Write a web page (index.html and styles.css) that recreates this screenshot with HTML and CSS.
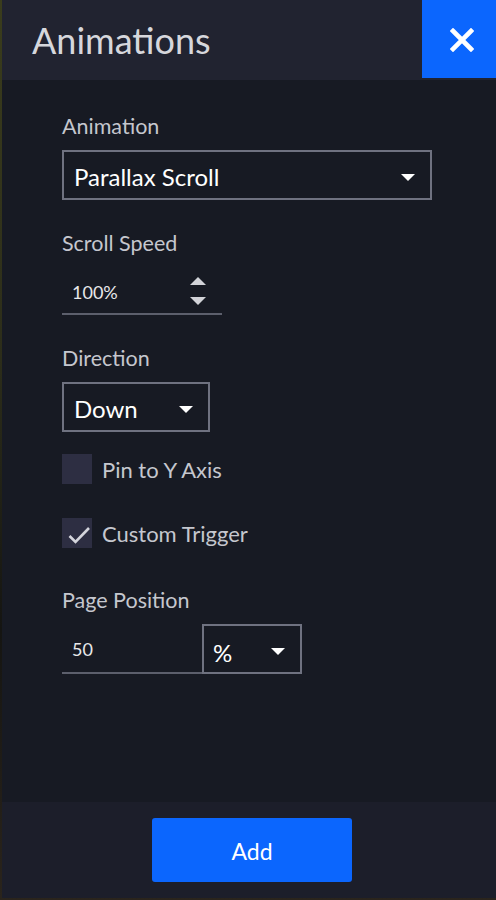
FILE: index.html
```html
<!DOCTYPE html>
<html lang="en">
<head>
<meta charset="utf-8">
<title>Animations</title>
<link rel="stylesheet" href="styles.css">
</head>
<body>
<div class="panel">
  <header class="header">
    <h1 class="title">Animations</h1>
    <button class="close" aria-label="Close">
      <svg width="24" height="24" viewBox="0 0 24 24"><path d="M3 3 L21 21 M21 3 L3 21" stroke="#fff" stroke-width="4.6" stroke-linecap="square" fill="none"/></svg>
    </button>
  </header>
  <main class="content">
    <div class="label first">Animation</div>
    <div class="select wide">
      <span class="value">Parallax Scroll</span>
      <svg class="caret" width="14" height="7" viewBox="0 0 14 7"><path d="M0 0 H14 L7 7 Z" fill="#fff"/></svg>
    </div>

    <div class="label">Scroll Speed</div>
    <div class="field speed">
      <span class="num">100%</span>
      <span class="spinner">
        <svg width="16" height="8" viewBox="0 0 16 8"><path d="M0 8 H16 L8 0 Z" fill="#d2d3d8"/></svg>
        <svg width="16" height="8" viewBox="0 0 16 8"><path d="M0 0 H16 L8 8 Z" fill="#d2d3d8"/></svg>
      </span>
    </div>

    <div class="label">Direction</div>
    <div class="select dir">
      <span class="value">Down</span>
      <svg class="caret" width="14" height="7" viewBox="0 0 14 7"><path d="M0 0 H14 L7 7 Z" fill="#fff"/></svg>
    </div>

    <div class="check-row pin">
      <span class="box"></span>
      <span class="check-label">Pin to Y Axis</span>
    </div>
    <div class="check-row trigger">
      <span class="box">
        <svg width="30" height="30" viewBox="0 0 30 30"><path d="M7.5 18 L13.5 24 L27 10" stroke="#d4d5dc" stroke-width="2.6" fill="none"/></svg>
      </span>
      <span class="check-label">Custom Trigger</span>
    </div>

    <div class="label pos">Page Position</div>
    <div class="pos-row">
      <div class="field pagepos"><span class="num">50</span></div>
      <div class="select unit">
        <span class="value">%</span>
        <svg class="caret" width="14" height="7" viewBox="0 0 14 7"><path d="M0 0 H14 L7 7 Z" fill="#fff"/></svg>
      </div>
    </div>
  </main>
  <footer class="footer">
    <button class="add">Add</button>
  </footer>
</div>
</body>
</html>
```

FILE: styles.css
```css
html, body {
  margin: 0;
  padding: 0;
  overflow: hidden;
  height: 100%;
}
body {
  background: linear-gradient(180deg, #3a3c1c 0%, #2c2d1a 40%, #151512 70%, #2a241c 100%);
  font-family: Lato, "Open Sans", sans-serif;
}
.panel {
  margin-left: 2px;
  width: 500px;
  height: 898px;
  display: flex;
  flex-direction: column;
  background: #171a23;
}
.header {
  height: 80px;
  flex: 0 0 80px;
  background: #212330;
  display: flex;
  align-items: flex-start;
  justify-content: space-between;
}
.title {
  margin: 0;
  padding: 18px 0 0 30px;
  font-size: 36px;
  font-weight: 400;
  line-height: 44px;
  color: #d6d7dc;
}
.close {
  width: 80px;
  height: 78px;
  border: 0;
  padding: 0;
  background: #0b66fe;
  display: flex;
  align-items: center;
  justify-content: center;
}
.close svg { margin-top: 1px; }
.content {
  flex: 1;
  padding: 0 0 0 60px;
  display: flex;
  flex-direction: column;
  align-items: flex-start;
}
.label {
  font-size: 21.5px;
  line-height: 28px;
  color: #c5c7ce;
  margin-top: 29px;
  margin-bottom: 10px;
}
.label.first { margin-top: 32px; }
.label.pos { margin-top: 38px; }
.select {
  box-sizing: border-box;
  height: 50px;
  border: 2px solid #6f7280;
  display: flex;
  align-items: center;
  justify-content: space-between;
  padding: 3px 15px 0 10px;
  color: #fff;
  font-size: 24px;
}
.select .value { line-height: 30px; }
.select .caret { margin-top: 2px; }
.wide { width: 370px; }
.dir { width: 148px; }
.unit { width: 100px; padding-left: 9px; }
.unit .value { margin-top: 5px; }
.field {
  box-sizing: border-box;
  height: 48px;
  border-bottom: 2px solid #5c5f6c;
  display: flex;
  align-items: center;
  padding: 3px 16px 0 10px;
  color: #e8e8ea;
  font-size: 18px;
}
.speed { width: 160px; justify-content: space-between; }
.spinner {
  display: flex;
  flex-direction: column;
  gap: 12px;
  margin-top: -2px;
}
.spinner svg { display: block; }
.pos-row {
  display: flex;
  align-items: flex-start;
}
.field.pagepos { width: 140px; height: 50px; padding-top: 1px; }
.check-row {
  display: flex;
  align-items: center;
  gap: 10px;
  margin-top: 22px;
}
.check-row.trigger { margin-top: 34px; }
.box {
  width: 30px;
  height: 30px;
  background: #2d2e42;
  display: block;
}
.box svg { display: block; }
.check-label {
  font-size: 22px;
  line-height: 28px;
  color: #c5c7ce;
  margin-top: 2px;
}
.footer {
  flex: 0 0 96px;
  height: 96px;
  background: #1c1e2a;
  display: flex;
  align-items: center;
  justify-content: center;
}
.add {
  width: 200px;
  height: 64px;
  border: 0;
  border-radius: 3px;
  background: #0b66fe;
  color: #fff;
  font-family: Lato, "Open Sans", sans-serif;
  font-size: 23px;
  padding: 2px 0 0 0;
}
```
